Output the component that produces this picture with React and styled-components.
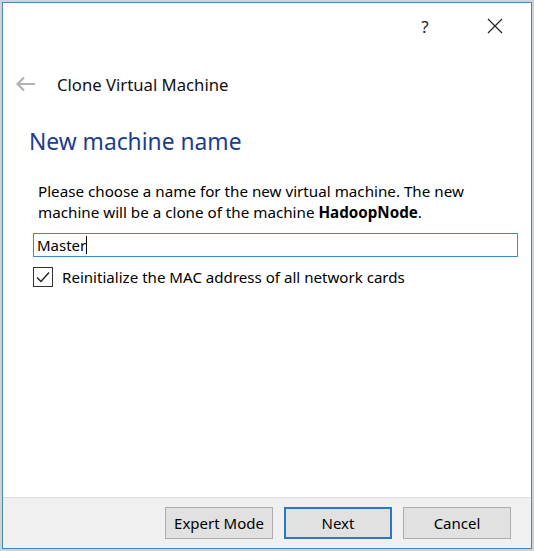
import styled, { createGlobalStyle } from 'styled-components'

const Global = createGlobalStyle`
  html, body {
    margin: 0;
    padding: 0;
    background: #cfd3d6;
  }
  body {
    font-family: 'Noto Sans', 'Open Sans', sans-serif;
    color: #000;
  }
`

function BackArrow() {
  return (
    <svg width='22' height='16' viewBox='0 0 22 16'>
      <path d='M20 8H2.5M9 1.5L2.5 8L9 14.5' fill='none' stroke='#b3b3b3' strokeWidth='2.2' />
    </svg>
  )
}

function CloseIcon() {
  return (
    <svg width='16' height='16' viewBox='0 0 16 16'>
      <path d='M1 1l14 14M15 1L1 15' stroke='#222' strokeWidth='1.2' />
    </svg>
  )
}

function CheckMark() {
  return (
    <svg width='14' height='12' viewBox='0 0 14 12'>
      <path d='M1 6.5l4 4L13 1.5' fill='none' stroke='#222' strokeWidth='1.4' />
    </svg>
  )
}

export default function App() {
  return (
    <>
      <Global />
      <Screen>
        <Dialog>
          <TitleBar>
            <HelpButton>?</HelpButton>
            <CloseButton>
              <CloseIcon />
            </CloseButton>
          </TitleBar>

          <Header>
            <BackButton>
              <BackArrow />
            </BackButton>
            <WizardTitle>Clone Virtual Machine</WizardTitle>
          </Header>

          <Body>
            <PageTitle>New machine name</PageTitle>
            <Description>
              Please choose a name for the new virtual machine. The new machine
              will be a clone of the machine <Strong>HadoopNode</Strong>.
            </Description>
            <NameInput>
              Master<Caret />
            </NameInput>
            <CheckRow>
              <CheckBox>
                <CheckMark />
              </CheckBox>
              <CheckLabel>Reinitialize the MAC address of all network cards</CheckLabel>
            </CheckRow>
          </Body>

          <Footer>
            <Button>Expert Mode</Button>
            <Button $primary>Next</Button>
            <Button>Cancel</Button>
          </Footer>
        </Dialog>
      </Screen>
    </>
  )
}

const Screen = styled.div`
  width: 534px;
  height: 551px;
  padding: 2px;
  box-sizing: border-box;
`

const Dialog = styled.div`
  width: 530px;
  height: 547px;
  box-sizing: border-box;
  border: 1px solid #4a86b8;
  background: #fff;
  display: flex;
  flex-direction: column;
`

const TitleBar = styled.div`
  height: 46px;
  display: flex;
  justify-content: flex-end;
  align-items: center;
  padding-right: 21px;
`

const HelpButton = styled.div`
  width: 46px;
  text-align: center;
  font-size: 17px;
  color: #222;
  margin-right: 32px;
  margin-top: 1px;
`

const CloseButton = styled.div`
  width: 30px;
  display: flex;
  justify-content: center;
`

const Header = styled.div`
  height: 44px;
  margin-top: 13px;
  display: flex;
  align-items: center;
`

const BackButton = styled.div`
  width: 54px;
  display: flex;
  justify-content: flex-start;
  padding-left: 12px;
  box-sizing: border-box;
`

const WizardTitle = styled.div`
  font-size: 16.7px;
  color: #111;
`

const Body = styled.div`
  flex: 1;
  padding: 19px 13px 0 30px;
`

const PageTitle = styled.h1`
  margin: 0 0 0 -4px;
  padding-top: 1px;
  font-weight: normal;
  font-size: 22.8px;
  color: #1c3d8c;
`

const Description = styled.p`
  margin: 24px 0 0 5px;
  font-size: 15.2px;
  line-height: 21px;
  color: #000;
`

const Strong = styled.span`
  font-weight: bold;
`

const NameInput = styled.div`
  margin-top: 10px;
  height: 24px;
  box-sizing: border-box;
  border: 1px solid #3f86d6;
  padding: 0 3px;
  font-size: 15px;
  line-height: 22px;
  display: flex;
  align-items: center;
`

const Caret = styled.span`
  display: inline-block;
  width: 1px;
  height: 18px;
  background: #000;
`

const CheckRow = styled.div`
  margin-top: 10px;
  display: flex;
  align-items: center;
  gap: 9px;
`

const CheckBox = styled.div`
  width: 20px;
  height: 20px;
  box-sizing: border-box;
  border: 1px solid #333;
  display: flex;
  align-items: center;
  justify-content: center;
`

const CheckLabel = styled.span`
  font-size: 15.1px;
`

const Footer = styled.div`
  height: 51px;
  background: #f0f0f0;
  border-top: 1px solid #dedede;
  display: flex;
  justify-content: flex-end;
  align-items: flex-start;
  padding: 9px 20px 0 0;
  gap: 11px;
  box-sizing: border-box;
`

const Button = styled.div`
  width: 108px;
  height: 32px;
  box-sizing: border-box;
  border: ${p => (p.$primary ? '2px solid #2a78c8' : '1px solid #adadad')};
  background: #e1e1e1;
  display: flex;
  align-items: center;
  justify-content: center;
  font-size: 15px;
  color: #000;
`
